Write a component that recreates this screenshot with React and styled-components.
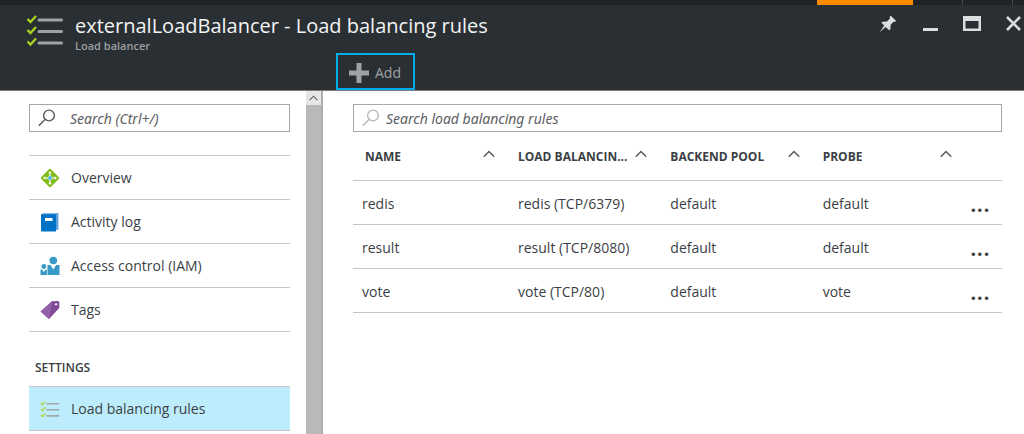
import React from "react";
import styled, { createGlobalStyle, css } from "styled-components";

const menuItems = [
  { label: "Overview", icon: <OverviewIcon /> },
  { label: "Activity log", icon: <LogIcon /> },
  { label: "Access control (IAM)", icon: <PeopleIcon /> },
  { label: "Tags", icon: <TagIcon /> },
];

const columns = ["NAME", "LOAD BALANCIN...", "BACKEND POOL", "PROBE"];

const rules = [
  { name: "redis", rule: "redis (TCP/6379)", pool: "default", probe: "default" },
  { name: "result", rule: "result (TCP/8080)", pool: "default", probe: "default" },
  { name: "vote", rule: "vote (TCP/80)", pool: "default", probe: "vote" },
];

function App() {
  return (
    <Page>
      <GlobalStyle />
      <TopStrip>
        <Notice />
        <StripSlot $width={49} />
        <StripSlot $width={50} />
        <StripSlot $width={12} />
      </TopStrip>
      <Header>
        <TitleRow>
          <ChecklistIcon width={38} height={34} />
          <Titles>
            <Title>externalLoadBalancer - Load balancing rules</Title>
            <Subtitle>Load balancer</Subtitle>
          </Titles>
          <WindowButtons>
            <WindowButton aria-label="Pin">
              <svg width="18" height="18" viewBox="0 0 18 18" fill="#dcdddd">
                <path d="M11.5 0.6 17.2 6.1 15.4 7 14.4 6.8 11.6 10 11.4 14.2 10.2 15.3 6.6 11.9 0.6 17.3 5.2 10.6 2.4 7.7 3.6 6.8 7.9 6.5 11 3.6 10.6 2.2Z" />
              </svg>
            </WindowButton>
            <WindowButton aria-label="Minimize">
              <svg width="18" height="18" viewBox="0 0 18 18">
                <path d="M2 14.5H17" stroke="#dcdddd" strokeWidth="3" />
              </svg>
            </WindowButton>
            <WindowButton aria-label="Maximize">
              <svg width="18" height="18" viewBox="0 0 18 18">
                <path d="M0 1H18V16H0ZM2.5 6V13.500H15.5V6Z" fill="#dcdddd" fillRule="evenodd" />
              </svg>
            </WindowButton>
            <WindowButton aria-label="Close">
              <svg width="18" height="18" viewBox="0 0 18 18">
                <path d="M2 2 15 15M15 2 2 15" stroke="#dcdddd" strokeWidth="2.6" />
              </svg>
            </WindowButton>
          </WindowButtons>
        </TitleRow>
        <Toolbar>
          <AddButton>
            <svg width="20" height="20" viewBox="0 0 20 20">
              <path d="M10 0V20M0 10H20" stroke="#a0a2a4" strokeWidth="5" />
            </svg>
            Add
          </AddButton>
        </Toolbar>
      </Header>
      <Body>
        <Sidebar>
          <SearchBox>
            <SearchIcon color="#555a5e" />
            <SearchInput aria-label="Search menu" placeholder="Search (Ctrl+/)" $gap={14} />
          </SearchBox>
          <Menu>
            {menuItems.map((item) => (
              <MenuItem key={item.label}>
                <MenuLink href="#">
                  {item.icon}
                  {item.label}
                </MenuLink>
              </MenuItem>
            ))}
          </Menu>
          <GroupTitle>SETTINGS</GroupTitle>
          <Menu>
            <MenuItem $active>
              <MenuLink href="#" aria-current="page">
                <Faded>
                  <ChecklistIcon width={20} height={18} />
                </Faded>
                Load balancing rules
              </MenuLink>
            </MenuItem>
          </Menu>
        </Sidebar>
        <ScrollTrack>
          <ScrollUp aria-label="Scroll up">
            <Caret width={9} height={6} color="#606060" />
          </ScrollUp>
        </ScrollTrack>
        <Main>
          <SearchBox>
            <SearchIcon color="#b9bbbd" />
            <SearchInput
              aria-label="Search load balancing rules"
              placeholder="Search load balancing rules"
              $gap={6}
            />
          </SearchBox>
          <Table>
            <thead>
              <tr>
                {columns.map((column) => (
                  <HeadCell key={column} scope="col">
                    <SortButton>
                      {column}
                      <Caret width={12} height={8} color="#54585c" />
                    </SortButton>
                  </HeadCell>
                ))}
                <HeadCell aria-label="Actions" />
              </tr>
            </thead>
            <tbody>
              {rules.map((row) => (
                <tr key={row.name}>
                  <Cell>{row.name}</Cell>
                  <Cell>{row.rule}</Cell>
                  <Cell>{row.pool}</Cell>
                  <Cell>{row.probe}</Cell>
                  <ActionCell>
                    <MoreButton aria-label={`Actions for ${row.name}`}>...</MoreButton>
                  </ActionCell>
                </tr>
              ))}
            </tbody>
          </Table>
        </Main>
      </Body>
    </Page>
  );
}

export default App;

function ChecklistIcon({ width, height }) {
  return (
    <svg width={width} height={height} viewBox="0 0 38 34" fill="none">
      <path
        d="M1.5 6 4.5 9 10 3M1.5 17 4.5 20 10 14M1.5 28.500 4.500 31.500 10 25.500"
        stroke="#a9d121"
        strokeWidth="2.4"
      />
      <path
        d="M13 7H35.500M13 18.500H35.500M13 30H35.500"
        stroke="#a0a2a4"
        strokeWidth="3"
        strokeLinecap="round"
      />
    </svg>
  );
}

function SearchIcon({ color }) {
  return (
    <svg width="18" height="18" viewBox="0 0 18 18" fill="none" stroke={color} strokeWidth="1.4">
      <circle cx="11" cy="6.5" r="5.400" />
      <path d="M7.200 10.300 0.800 16.700" />
    </svg>
  );
}

function Caret({ width, height, color }) {
  return (
    <svg width={width} height={height} viewBox="0 0 12 8" fill="none">
      <path d="M0.800 6.800 6 1.500 11.200 6.800" stroke={color} strokeWidth="1.4" />
    </svg>
  );
}

function OverviewIcon() {
  return (
    <svg width="20" height="20" viewBox="0 0 20 20">
      <rect x="3.2" y="3.2" width="13.600" height="13.600" rx="1" fill="#80bc15" transform="rotate(45 10 10)" />
      <path d="M10 4.500V15.500M4.500 10H15.500" stroke="#fff" strokeWidth="1.200" />
      <path
        d="M10 3 11.800 5.300H8.200ZM10 17 11.800 14.700H8.200ZM3 10 5.300 8.200V11.800ZM17 10 14.700 8.200V11.800Z"
        fill="#fff"
      />
      <circle cx="10" cy="10" r="2.200" fill="#48b3e0" stroke="#fff" strokeWidth="0.500" />
    </svg>
  );
}

function LogIcon() {
  return (
    <svg width="20" height="20" viewBox="0 0 20 20">
      <path d="M3 1H18.500V18H16V3H1.500Z" fill="#7db4e3" />
      <path d="M17 1.500V17" stroke="#2f83cc" strokeWidth="0.800" />
      <path d="M1 2.200H16V19.500H2Q1 19.500 1 18.500Z" fill="#0072c6" />
      <rect x="5" y="6" width="7.500" height="3" fill="#fff" />
    </svg>
  );
}

function PeopleIcon() {
  return (
    <svg width="20" height="20" viewBox="0 0 20 20" fill="#3999c6">
      <circle cx="13.300" cy="4.500" r="3.800" />
      <path d="M7.500 9H10.500L13.300 13.500 16.200 9H19.500V19H7.500Z" />
      <circle cx="3.800" cy="10.500" r="2.400" />
      <path d="M0.500 13.500H2L3.800 16 5.500 13.500H6.800V19H0.500Z" />
    </svg>
  );
}

function TagIcon() {
  return (
    <svg width="20" height="20" viewBox="0 0 20 20">
      <path d="M12 1.200 18 1Q19.300 1 19.300 2.500V8L9 19 0.600 11.500Z" fill="#804998" />
      <path d="M12 1.200 9.500 18.500 9 19 0.600 11.500Z" fill="#925fa8" />
      <circle cx="16" cy="4.200" r="1.500" fill="#fff" stroke="#5c2d75" strokeWidth="0.600" />
    </svg>
  );
}

const GlobalStyle = createGlobalStyle`
  * {
    box-sizing: border-box;
  }

  body {
    margin: 0;
    background: #fff;
    color: #3b3f45;
    font-family: "Open Sans", "Noto Sans", sans-serif;
    font-size: 14px;
    line-height: 20px;
  }

  button,
  input {
    font: inherit;
    color: inherit;
    margin: 0;
    padding: 0;
    border: 0;
    background: none;
  }

  svg {
    display: block;
    flex-shrink: 0;
  }
`;

const Page = styled.div`
  display: flex;
  flex-direction: column;
  min-height: 100vh;
`;

const TopStrip = styled.div`
  display: flex;
  justify-content: flex-end;
  height: 5px;
  background: #1f2327;
`;

const Notice = styled.div`
  width: 96px;
  background: #ff8c00;
`;

const StripSlot = styled.div`
  width: ${(props) => props.$width}px;

  & + & {
    border-left: 1px solid #44484b;
  }
`;

const Header = styled.header`
  background: #2a2f33;
  border-bottom: 1px solid #77797b;
`;

const TitleRow = styled.div`
  display: flex;
  align-items: flex-start;
  height: 48px;
  padding: 8px 0 0 26px;
`;

const Titles = styled.div`
  flex: 1;
  padding-left: 11px;
`;

const Title = styled.h1`
  margin: 0;
  font-size: 20px;
  line-height: 25px;
  font-weight: 400;
  color: #f3f4f4;
`;

const Subtitle = styled.p`
  margin: 0;
  font-size: 11px;
  line-height: 16px;
  font-weight: 600;
  color: #9c9fa1;
`;

const WindowButtons = styled.div`
  display: flex;
  gap: 24px;
  padding-top: 2px;
  padding-right: 1px;
`;

const WindowButton = styled.button`
  width: 18px;
  height: 18px;
`;

const Toolbar = styled.div`
  padding-left: 336px;
`;

const AddButton = styled.button`
  display: flex;
  align-items: center;
  gap: 6px;
  width: 79px;
  height: 37px;
  padding: 2px 0 0 11px;
  border: 2px solid #00abec;
  color: #a0a2a4;
`;

const Body = styled.div`
  display: flex;
  flex: 1;
`;

const Sidebar = styled.nav`
  width: 306px;
  padding: 13px 16px 0 29px;
`;

const SearchBox = styled.div`
  display: flex;
  align-items: center;
  height: 28px;
  padding-left: 8px;
  border: 1px solid #a6a8aa;
`;

const SearchInput = styled.input`
  flex: 1;
  min-width: 0;
  height: 26px;
  margin-left: ${(props) => props.$gap}px;
  font-family: "Noto Sans", "Open Sans", sans-serif;
  outline: none;

  &::placeholder {
    color: #5c6065;
    font-style: italic;
    opacity: 1;
  }
`;

const Menu = styled.ul`
  margin: 0;
  padding: 0;
  list-style: none;
  border-top: 1px solid #c4c6c7;

  ${SearchBox} + & {
    margin-top: 23px;
  }
`;

const MenuItem = styled.li`
  border-bottom: 1px solid #c4c6c7;

  ${(props) =>
    props.$active &&
    css`
      background: #bdedfc;
    `}
`;

const MenuLink = styled.a`
  display: flex;
  align-items: center;
  gap: 11px;
  height: 43px;
  padding-left: 11px;
  color: inherit;
  text-decoration: none;
`;

const Faded = styled.span`
  opacity: 0.9;
`;

const GroupTitle = styled.h2`
  margin: 0;
  padding: 26px 6px 8px;
  font-size: 12px;
  line-height: 20px;
  font-weight: 600;
`;

const ScrollTrack = styled.div`
  width: 17px;
  background: #b9b9b9;
  border-right: 2px solid #adadad;
`;

const ScrollUp = styled.button`
  display: flex;
  align-items: center;
  justify-content: center;
  width: 15px;
  height: 14px;
  background: #e6e6e6;
`;

const Main = styled.main`
  flex: 1;
  min-width: 0;
  padding: 13px 22px 0 30px;
`;

const Table = styled.table`
  width: 100%;
  table-layout: fixed;
  border-collapse: separate;
  border-spacing: 0;
`;

const HeadCell = styled.th`
  height: 49px;
  padding: 2px 14px 0 9px;
  border-bottom: 1px solid #c4c6c7;

  &:first-child {
    width: 156px;
    padding-left: 12px;
  }

  &:last-child {
    width: 36px;
    padding: 0;
  }
`;

const SortButton = styled.button`
  display: flex;
  justify-content: space-between;
  width: 100%;
  font-size: 12px;
  line-height: 20px;
  font-weight: 700;
  white-space: nowrap;

  svg {
    margin-top: 3px;
  }
`;

const Cell = styled.td`
  height: 44px;
  padding: 2px 0 0 9px;
  border-bottom: 1px solid #c4c6c7;
`;

const ActionCell = styled(Cell)`
  padding: 0;
`;

const MoreButton = styled.button`
  display: block;
  padding-left: 4px;
  font-size: 24px;
  line-height: 24px;
  font-weight: 600;
`;
